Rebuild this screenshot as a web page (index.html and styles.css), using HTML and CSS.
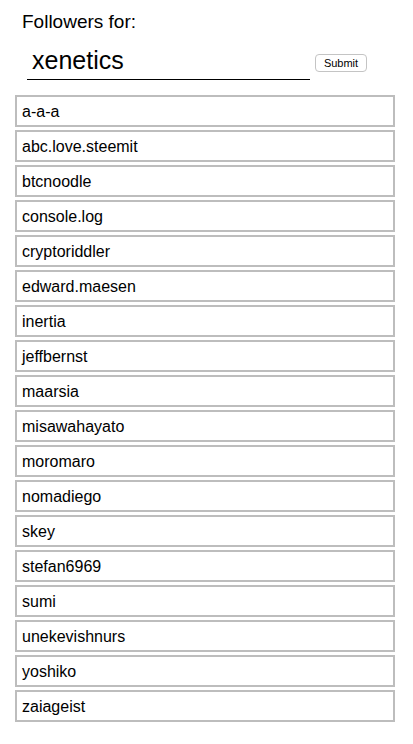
FILE: index.html
```html
<!DOCTYPE html>
<html>
<head>
<meta charset="utf-8">
<link rel="stylesheet" href="styles.css">
</head>
<body>
<div class="page">
  <div class="title">Followers for:</div>
  <form class="search">
    <input class="name" type="text" value="xenetics">
    <button class="submit" type="button">Submit</button>
  </form>
  <ul class="list">
    <li class="item">a-a-a</li>
    <li class="item">abc.love.steemit</li>
    <li class="item">btcnoodle</li>
    <li class="item">console.log</li>
    <li class="item">cryptoriddler</li>
    <li class="item">edward.maesen</li>
    <li class="item">inertia</li>
    <li class="item">jeffbernst</li>
    <li class="item">maarsia</li>
    <li class="item">misawahayato</li>
    <li class="item">moromaro</li>
    <li class="item">nomadiego</li>
    <li class="item">skey</li>
    <li class="item">stefan6969</li>
    <li class="item">sumi</li>
    <li class="item">unekevishnurs</li>
    <li class="item">yoshiko</li>
    <li class="item">zaiageist</li>
  </ul>
</div>
</body>
</html>
```
FILE: styles.css
```css
html, body {
  margin: 0;
  padding: 0;
  background: #fff;
}
.page {
  font-family: "Liberation Sans", Arial, sans-serif;
  color: #000;
}
.title {
  font-size: 19px;
  line-height: 22px;
  padding: 11px 0 0 22px;
}
.search {
  display: flex;
  align-items: center;
  margin: 8px 0 0 27px;
}
.name {
  width: 283px;
  height: 39px;
  box-sizing: border-box;
  border: none;
  border-bottom: 1px solid #000;
  padding: 0 0 0 5px;
  margin: 0;
  font-family: "Liberation Sans", Arial, sans-serif;
  font-size: 25px;
  color: #000;
  outline: none;
}
.submit {
  margin: 4px 0 0 5px;
  width: 52px;
  height: 18px;
  box-sizing: border-box;
  padding: 0;
  font-family: "Liberation Sans", Arial, sans-serif;
  font-size: 11px;
  background: #fff;
  border: 1px solid #c4c4c4;
  border-radius: 4px;
  color: #000;
}
.list {
  list-style: none;
  margin: 15px 0 0 15px;
  padding: 0;
  width: 380px;
  display: flex;
  flex-direction: column;
  gap: 3px;
}
.item {
  box-sizing: border-box;
  height: 32px;
  border: 2px solid #bdbdbd;
  padding: 0 0 0 5px;
  font-size: 16px;
  line-height: 29px;
}
```
